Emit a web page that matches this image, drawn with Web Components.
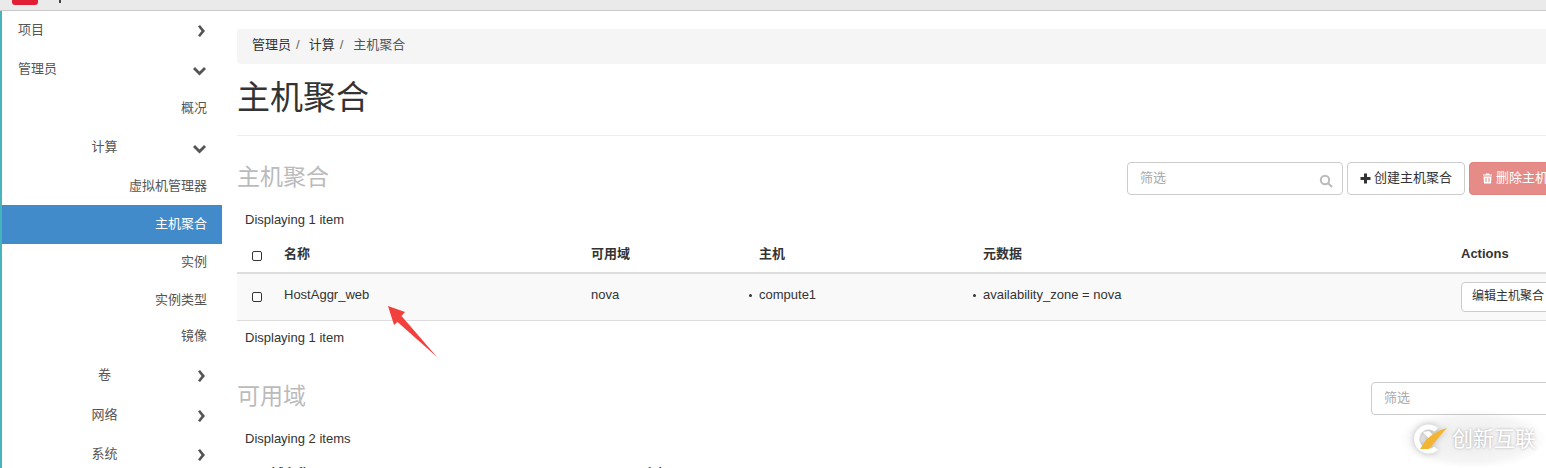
<!DOCTYPE html>
<html lang="zh">
<head>
<meta charset="utf-8">
<style>
  html, body { margin: 0; height: 468px; overflow: hidden; background: #fff; }
  body { font: 13px/1.43 "Liberation Sans", "Noto Sans CJK SC", sans-serif; color: #333; }
</style>
</head>
<body>
<app-shell>
  <side-nav slot="nav">
    <nav-row h="39" level="top" icon="right">项目</nav-row>
    <nav-row h="39" level="top" icon="down">管理员</nav-row>
    <nav-row h="39">概况</nav-row>
    <nav-row h="39" level="mid" icon="down">计算</nav-row>
    <nav-row h="38">虚拟机管理器</nav-row>
    <nav-row h="39" active>主机聚合</nav-row>
    <nav-row h="36">实例</nav-row>
    <nav-row h="40">实例类型</nav-row>
    <nav-row h="33">镜像</nav-row>
    <nav-row h="45" level="mid" icon="right">卷</nav-row>
    <nav-row h="35" level="mid" icon="right">网络</nav-row>
    <nav-row h="43" level="mid" icon="right">系统</nav-row>
  </side-nav>
  <main-area slot="main"></main-area>
</app-shell>

<template id="main-tpl">
  <style>
    :host { display: block; width: 1350px; padding-top: 18px; }
    .crumb { height: 33px; padding: 0 0 2px 15px; background: #f5f5f5; border-radius: 4px; display: flex; align-items: center; gap: 5px; color: #333; }
    .crumb .sep { color: #666; margin-right: 4px; }
    .crumb .now { color: #555; margin-left: 1px; }
    h1 { margin: 0; height: 71px; border-bottom: 1px solid #eee; font-size: 33px; font-weight: 400; line-height: 68px; color: #333; }
    .head { display: flex; justify-content: space-between; align-items: flex-start; }
    h2 { margin: -5px 0 0; font-size: 23px; font-weight: 400; color: #bbb; line-height: 40px; }
    .tools { display: flex; gap: 4px; }
    .one { height: 33px; margin-top: 26px; }
    .count { padding-left: 8px; height: 18px; line-height: 18px; }
    .avail { height: 32px; margin-top: 34px; }
    .avail filter-box { margin-top: 1px; }
    .cut { position: relative; height: 40px; }
    .cut span { position: absolute; top: 17px; font-weight: 700; line-height: 18px; }
  </style>
  <nav class="crumb"><span>管理员</span><span class="sep">/</span><span>计算</span><span class="sep">/</span><span class="now">主机聚合</span></nav>
  <h1>主机聚合</h1>
  <div class="head one">
    <h2>主机聚合</h2>
    <div class="tools">
      <filter-box style="width:216px" search></filter-box>
      <plain-btn style="width:118px"><svg width="11" height="11" viewBox="0 0 11 11" fill="#333"><path d="M4 0.5h3v3.5h3.5v3h-3.5v3.5h-3v-3.5h-3.5v-3h3.5z"/></svg>创建主机聚合</plain-btn>
      <plain-btn danger style="width:118px"><svg width="11" height="11" viewBox="0 0 10 11" fill="#fff"><path d="M3.5 0.5h3l.5 1h2.5v1h-9v-1h2.5zM1 3.500h8l-.5 7h-7zM3 5v4h1v-4zM6 5v4h1v-4z"/></svg>删除主机聚合</plain-btn>
    </div>
  </div>
  <div class="count" style="margin-top:16px">Displaying 1 item</div>
  <host-table></host-table>
  <div class="count" style="margin-top:8px">Displaying 1 item</div>
  <div class="head avail">
    <h2>可用域</h2>
    <filter-box style="width:216px"></filter-box>
  </div>
  <div class="count" style="margin-top:17px">Displaying 2 items</div>
  <div class="cut"><span style="left:8px">可用域名称</span><span style="left:407px">主机</span><span style="left:1150px">可用</span></div>
</template>

<template id="table-tpl">
  <style>
    :host { display: block; margin-top: 7px; }
    .row { display: grid; grid-template-columns: 47px 307px 168px 224px 478px 1fr; align-items: center; }
    .hd { height: 36px; border-bottom: 2px solid #ddd; font-weight: 700; }
    .bd { height: 42px; padding-bottom: 4px; background: #f9f9f9; border-bottom: 1px solid #ddd; }
    .box { width: 8px; height: 8px; margin: 3px 0 0 15px; border: 1px solid #333; border-radius: 2px; background: #fff; }
    .dot { position: relative; }
    .dot::before { content: ""; position: absolute; left: -10px; top: 8px; width: 3px; height: 3px; border-radius: 50%; background: #333; }
  </style>
  <div class="row hd"><i class="box"></i><span>名称</span><span>可用域</span><span>主机</span><span>元数据</span><span>Actions</span></div>
  <div class="row bd"><i class="box"></i><span>HostAggr_web</span><span>nova</span><span class="dot">compute1</span><span class="dot">availability_zone = nova</span><span><plain-btn style="width:130px;height:30px;margin-top:4px;padding-left:10px;font-size:12px">编辑主机聚合</plain-btn></span></div>
</template>

<script>
  class AppShell extends HTMLElement {
    constructor() {
      super();
      this.attachShadow({ mode: 'open' });
      this.shadowRoot.innerHTML = `
        <style>
          :host { display: block; height: 468px; overflow: hidden; position: relative; }
          .top { height: 10px; background: #eaeaea; border-bottom: 1px solid #c9c9c9; display: flex; }
          .logo { width: 26px; height: 5px; margin-left: 12px; background: #e01e34; border-radius: 0 0 3px 3px; }
          .p { width: 2px; height: 3px; margin-left: 21px; background: #444; }
          .wrap { display: flex; border-left: 2px solid #47b3bd; height: 457px; }
          .nav { width: 220px; flex: none; }
          .main { margin-left: 15px; flex: 1; overflow: hidden; }
          .arrow { position: absolute; left: 385px; top: 303px; }
          .mark { position: absolute; left: 1400px; top: 410px; width: 146px; height: 58px; display: flex; align-items: center; gap: 3px; padding-left: 11px; box-sizing: border-box;
            background: radial-gradient(ellipse at center, rgba(0,0,0,.08), rgba(0,0,0,.04) 55%, transparent 72%);
            font-size: 21px; color: #fff; text-shadow: 0 0 3px rgba(0,0,0,.3); }
        </style>
        <div class="top"><div class="logo"></div><div class="p"></div></div>
        <div class="wrap">
          <div class="nav"><slot name="nav"></slot></div>
          <div class="main"><slot name="main"></slot></div>
        </div>
        <svg class="arrow" width="54" height="57" viewBox="0 0 54 57"><path d="M3 3L20 9L16.500 13L52 54L12.500 19L9 22z" fill="#f2403c"/></svg>
        <div class="mark">
          <svg width="38" height="38" viewBox="0 0 38 38" style="filter:drop-shadow(0 0 3px rgba(0,0,0,.25))">
            <path d="M27 8A14.500 14.500 0 1 0 27 30L23.500 26.500A9.500 9.500 0 1 1 23.500 11.500z" fill="#fff"/>
            <path d="M12 12L18 11L24 17L20 21z" fill="#fff"/>
            <path d="M36 8C28 10 20 15 15 20L9 29L18 29C24 22 30 14 36 8z" fill="#f3b431"/>
          </svg>
          <span>创新互联</span>
        </div>`;
    }
  }

  class SideNav extends HTMLElement {
    constructor() {
      super();
      this.attachShadow({ mode: 'open' });
      this.shadowRoot.innerHTML = `<style>:host { display: block; }</style><slot></slot>`;
    }
  }

  class NavRow extends HTMLElement {
    constructor() {
      super();
      this.attachShadow({ mode: 'open' });
    }
    connectedCallback() {
      const h = this.getAttribute('h') || 38;
      const icon = this.getAttribute('icon');
      const active = this.hasAttribute('active');
      const paths = {
        right: 'M2 1.500L4 0L9 6L4 12L2 10.500L5.500 6z',
        down: 'M0 3L2 1L6.500 5.500L11 1L13 3L6.500 9.500z'
      };
      const w = icon === 'down' ? 13 : 9;
      const svg = icon ? `<svg class="ic ${icon}" width="${w}" height="12" viewBox="0 0 ${w} 12"><path d="${paths[icon]}" fill="#555"/></svg>` : '';
      this.shadowRoot.innerHTML = `
        <style>
          :host { display: flex; align-items: center; height: ${h}px; position: relative; color: ${active ? '#fff' : '#555'};
            background: ${active ? '#428bca' : 'transparent'}; box-sizing: border-box; }
          .txt { flex: 1; text-align: right; padding-right: 15px; }
          :host([level=top]) .txt { text-align: left; padding-left: 16px; }
          :host([level=mid]) .txt { text-align: center; padding: 0 17px 0 0; width: 205px; flex: none; }
          .ic { position: absolute; }
          .right { left: 194px; }
          .down { left: 191px; top: 50%; margin-top: -4px; }
        </style>
        <span class="txt"><slot></slot></span>${svg}`;
    }
  }

  class MainArea extends HTMLElement {
    constructor() {
      super();
      this.attachShadow({ mode: 'open' });
      this.shadowRoot.appendChild(document.getElementById('main-tpl').content.cloneNode(true));
    }
  }

  class HostTable extends HTMLElement {
    constructor() {
      super();
      this.attachShadow({ mode: 'open' });
      this.shadowRoot.appendChild(document.getElementById('table-tpl').content.cloneNode(true));
    }
  }

  class FilterBox extends HTMLElement {
    constructor() {
      super();
      this.attachShadow({ mode: 'open' });
    }
    connectedCallback() {
      const glass = this.hasAttribute('search')
        ? `<svg width="14" height="14" viewBox="0 0 14 14" fill="none" stroke="#bbb" stroke-width="2"><circle cx="6" cy="6" r="4.200"/><path d="M9 9l4 4"/></svg>` : '';
      this.shadowRoot.innerHTML = `
        <style>
          :host { display: flex; align-items: center; justify-content: space-between; box-sizing: border-box; height: 33px; padding: 0 9px 0 12px;
            background: #fff; border: 1px solid #ccc; border-radius: 4px; color: #aaa; }
          svg { margin-top: 5px; }
        </style>
        <span>筛选</span>${glass}`;
    }
  }

  class PlainBtn extends HTMLElement {
    constructor() {
      super();
      this.attachShadow({ mode: 'open' });
      this.shadowRoot.innerHTML = `
        <style>
          :host { display: flex; align-items: center; box-sizing: border-box; height: 33px; padding: 0 10px 0 12px; gap: 3px; white-space: nowrap;
            background: #fff; border: 1px solid #ccc; border-radius: 4px; color: #333; overflow: hidden; }
          :host([danger]) { background: #e58b88; border-color: #e08280; color: #fff; }
        </style>
        <slot></slot>`;
    }
  }

  customElements.define('app-shell', AppShell);
  customElements.define('side-nav', SideNav);
  customElements.define('nav-row', NavRow);
  customElements.define('main-area', MainArea);
  customElements.define('host-table', HostTable);
  customElements.define('filter-box', FilterBox);
  customElements.define('plain-btn', PlainBtn);
</script>
</body>
</html>
